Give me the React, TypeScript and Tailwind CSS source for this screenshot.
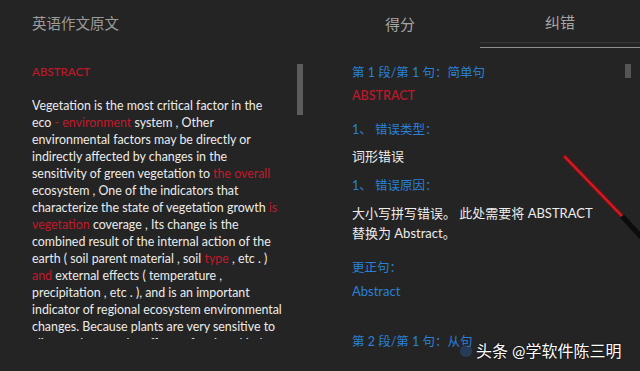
import React from 'react';

const FONT = 'Lato, "Noto Sans CJK SC", sans-serif';

type Seg = { t: string; red?: boolean };

// Lines of the original essay, broken as they appear on screen
const ESSAY: Seg[][] = [
  [{ t: 'Vegetation is the most critical factor in the' }],
  [{ t: 'eco ' }, { t: '- environment', red: true }, { t: ' system , Other' }],
  [{ t: 'environmental factors may be directly or' }],
  [{ t: 'indirectly affected by changes in the' }],
  [{ t: 'sensitivity of green vegetation to ' }, { t: 'the overall', red: true }],
  [{ t: 'ecosystem , One of the indicators that' }],
  [{ t: 'characterize the state of vegetation growth ' }, { t: 'is', red: true }],
  [{ t: 'vegetation', red: true }, { t: ' coverage , Its change is the' }],
  [{ t: 'combined result of the internal action of the' }],
  [{ t: 'earth ( soil parent material , soil ' }, { t: 'type', red: true }, { t: ' , etc . )' }],
  [{ t: 'and', red: true }, { t: ' external effects ( temperature ,' }],
  [{ t: 'precipitation , etc . ), and is an important' }],
  [{ t: 'indicator of regional ecosystem environmental' }],
  [{ t: 'changes. Because plants are very sensitive to' }],
  [{ t: 'climate change , the effects of various kinds' }],
];

function EssayPanel() {
  return (
    <div className="w-[320px] flex flex-col">
      <div className="h-[48px] flex items-center pl-[32px] text-[14.5px] text-[#9c9c9c]">英语作文原文</div>
      <div className="flex pl-[32px] pt-[14px]">
        <div className="w-[265px] h-[277px] overflow-hidden">
          <div className="h-[20px] leading-[20px] text-[11.5px] text-[#b8192b] font-semibold">ABSTRACT</div>
          <div className="mt-[14.5px] text-[12.4px] leading-[17px] text-[#ececec]">
            {ESSAY.map((line, i) => (
              <div key={i} className="whitespace-nowrap">
                {line.map((s, j) => (
                  <span key={j} className={s.red ? 'text-[#c01a2c]' : ''}>{s.t}</span>
                ))}
              </div>
            ))}
          </div>
        </div>
        <div className="ml-auto mr-[17px] mt-[2px] w-[6px] h-[51px] bg-[#5c5c5c]" />
      </div>
    </div>
  );
}

function Label({ children }: { children: React.ReactNode }) {
  return <div className="h-[20px] leading-[20px] text-[12.5px] text-[#2a80d8]">{children}</div>;
}

function CorrectionPanel() {
  return (
    <div className="w-[320px] flex flex-col">
      <div className="h-[48px] flex text-[15px] text-[#a6a6a6]">
        <div className="flex-1 flex items-center justify-center">得分</div>
        <div className="flex-1 flex flex-col">
          <div className="flex-1 flex items-center justify-center pt-[2px]">纠错</div>
          <div className="h-[1px] bg-[#383838]" />
          <div className="h-[4px]" />
          <div className="h-[1px] bg-[#8e8e8e]" />
        </div>
      </div>
      <div className="flex pl-[32px] pt-[15px]">
        <div className="flex-1 flex flex-col">
          <Label>第 1 段/第 1 句：简单句</Label>
          <div className="mt-[3px] h-[20px] leading-[20px] text-[12.5px] text-[#b8192b] font-semibold">ABSTRACT</div>
          <div className="mt-[14px]"><Label>1、 错误类型：</Label></div>
          <div className="mt-[6px] h-[20px] leading-[20px] text-[13px] text-[#ececec]">词形错误</div>
          <div className="mt-[10px]"><Label>1、 错误原因：</Label></div>
          <div className="mt-[7px] text-[13px] leading-[20px] text-[#ececec]">
            <div>大小写拼写错误。 此处需要将 ABSTRACT</div>
            <div>替换为 Abstract。</div>
          </div>
          <div className="mt-[15px]"><Label>更正句：</Label></div>
          <div className="mt-[3px] h-[20px] leading-[20px] text-[13px] text-[#2a80d8]">Abstract</div>
          <div className="mt-[31px]"><Label>第 2 段/第 1 句：从句</Label></div>
        </div>
        <div className="mr-[9px] mt-[1px] w-[6px] h-[14px] bg-[#555555]" />
      </div>
    </div>
  );
}

export default function App() {
  return (
    <div
      className="relative w-[640px] h-[371px] overflow-hidden bg-[#242424] flex"
      style={{ fontFamily: FONT }}
    >
      <EssayPanel />
      <CorrectionPanel />

      {/* pointer stroke drawn over the page */}
      <svg className="absolute left-[560px] top-[150px]" width="80" height="90" viewBox="0 0 80 90">
        <line x1="5" y1="7" x2="62" y2="66" stroke="#8a0e12" strokeWidth="5" strokeLinecap="round" opacity="0.5" />
        <line x1="5" y1="7" x2="62" y2="66" stroke="#d81820" strokeWidth="2.5" strokeLinecap="round" />
        <line x1="62" y1="66" x2="82" y2="88" stroke="#0c0c0c" strokeWidth="5" />
      </svg>

      {/* watermark */}
      <div className="absolute left-[460px] top-[340px] flex items-center gap-[4px]">
        <div className="w-[12px] h-[12px] rounded-full bg-[#2a5fa8] opacity-40" />
        <div className="text-[16px] leading-[22px] text-white [text-shadow:0_0_2px_#000]">头条 @学软件陈三明</div>
      </div>
    </div>
  );
}
